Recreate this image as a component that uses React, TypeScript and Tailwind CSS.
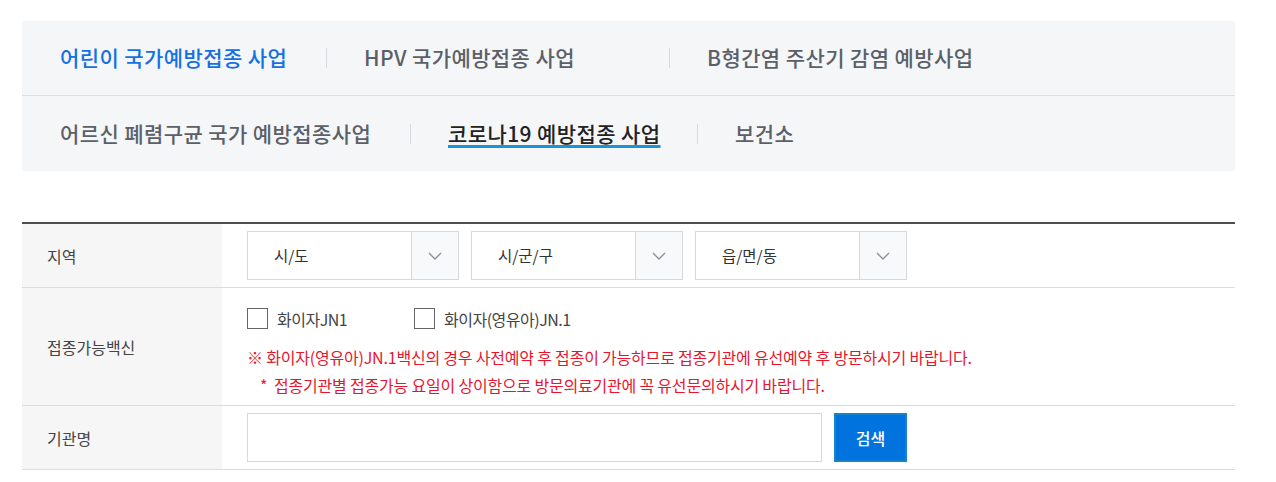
import clsx from "clsx";

type Tab = { label: string; w: string; tone?: "blue" | "active" };

const tabRows: Tab[][] = [
  [
    { label: "어린이 국가예방접종 사업", w: "w-[304px]", tone: "blue" },
    { label: "HPV 국가예방접종 사업", w: "w-[343px]" },
    { label: "B형간염 주산기 감염 예방사업", w: "flex-1" },
  ],
  [
    { label: "어르신 폐렴구균 국가 예방접종사업", w: "w-[388px]" },
    { label: "코로나19 예방접종 사업", w: "w-[287px]", tone: "active" },
    { label: "보건소", w: "flex-1" },
  ],
];

const regions = ["시/도", "시/군/구", "읍/면/동"];
const vaccines = ["화이자JN1", "화이자(영유아)JN.1"];

const Chevron = () => (
  <svg width="14" height="8" viewBox="0 0 14 8" fill="none">
    <polyline points="1,1 7,7 13,1" stroke="#8d9299" strokeWidth="1.4" />
  </svg>
);

const SelectBox = ({ label }: { label: string }) => (
  <div className="flex h-[49px] w-[212px] border border-[#d5d8dc] bg-white">
    <div className="flex flex-1 items-center pl-[26px] text-[15.5px] text-[#333]">
      {label}
    </div>
    <div className="flex w-[47px] items-center justify-center border-l border-[#d5d8dc] bg-[#f8f9fb]">
      <Chevron />
    </div>
  </div>
);

const Row = ({
  label,
  children,
  cellClass,
}: {
  label: string;
  children: React.ReactNode;
  cellClass?: string;
}) => (
  <div className="flex border-b border-[#dcdcdc]">
    <div className="flex w-[200px] shrink-0 items-center bg-[#f6f6f6] pl-[25px] text-[16px] text-[#444]">
      {label}
    </div>
    <div className={clsx("flex-1 pl-[25px]", cellClass)}>{children}</div>
  </div>
);

const App = () => {
  return (
    <div className="min-h-[482px] bg-white pt-[21px] pl-[22px] pr-[41px] font-['Noto_Sans_CJK_KR','Noto_Sans',sans-serif]">
      <div className="bg-[#f5f6f8]">
        {tabRows.map((row, ri) => (
          <div
            key={ri}
            className={clsx(
              "flex",
              ri === 0 ? "h-[75px] border-b border-[#dcdee2]" : "h-[75px]"
            )}
          >
            {row.map((tab, ti) => (
              <div key={tab.label} className={clsx("flex items-center", tab.w)}>
                {ti > 0 && <div className="h-5 w-px bg-[#d6d9dd]" />}
                <span
                  className={clsx(
                    "text-[21px] font-medium tracking-[0.4px]",
                    ti > 0 ? "ml-[37px]" : "ml-[38px]",
                    tab.tone === "blue" && "text-[#1471e3]",
                    tab.tone === "active" &&
                      "text-[#222] underline decoration-[#1a93d9] decoration-3 underline-offset-[3px]",
                    !tab.tone && "text-[#5b6068]"
                  )}
                >
                  {tab.label}
                </span>
              </div>
            ))}
          </div>
        ))}
      </div>

      <div className="mt-[51px] border-t-2 border-[#4d4d4d]">
        <Row label="지역" cellClass="flex gap-3 py-[7px]">
          {regions.map((r) => (
            <SelectBox key={r} label={r} />
          ))}
        </Row>

        <Row label="접종가능백신" cellClass="pt-[20px] pb-[6px]">
          <div className="flex h-[21px] items-center text-[16px] text-[#444]">
            {vaccines.map((v, i) => (
              <label
                key={v}
                className={clsx("flex items-center gap-[9px]", i === 0 ? "w-[167px]" : "")}
              >
                <span className="h-[21px] w-[21px] border border-[#666] bg-white" />
                <span className="tracking-[-0.5px]">{v}</span>
              </label>
            ))}
          </div>
          <div className="mt-[14px] text-[16px] leading-[28px] tracking-[-0.2px] text-[#e8152e]">
            <p>
              ※ 화이자(영유아)JN.1백신의 경우 사전예약 후 접종이 가능하므로 접종기관에 유선예약 후
              방문하시기 바랍니다.
            </p>
            <p className="pl-[13px]">
              * &nbsp;접종기관별 접종가능 요일이 상이함으로 방문의료기관에 꼭 유선문의하시기 바랍니다.
            </p>
          </div>
        </Row>

        <Row label="기관명" cellClass="flex gap-3 py-[7px]">
          <input
            type="text"
            className="h-[49px] w-[575px] border border-[#d5d8dc] bg-white px-3 text-[15px] outline-none"
          />
          <button className="h-[49px] w-[73px] border-2 border-[#1684cd] bg-[#0073df] text-[16px] font-medium text-white">
            검색
          </button>
        </Row>
      </div>
    </div>
  );
};

export default App;
